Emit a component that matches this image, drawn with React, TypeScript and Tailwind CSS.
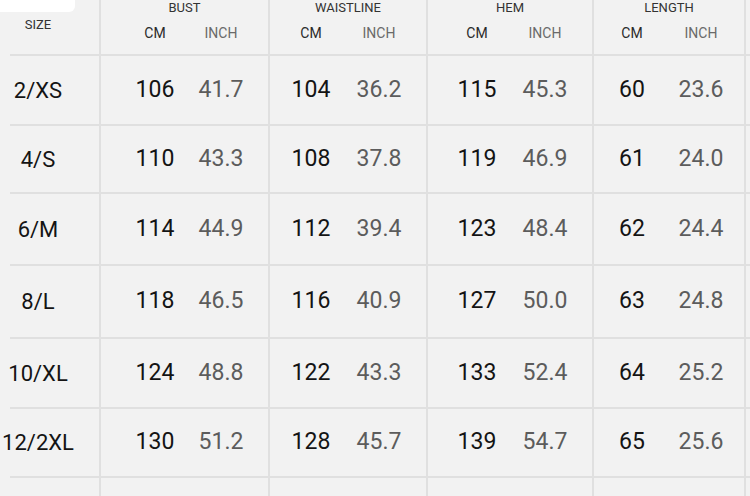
import React from "react";

// size chart: [label, bust cm/in, waist cm/in, hem cm/in, length cm/in]
const rows: [string, number[]][] = [
  ["2/XS", [106, 41.7, 104, 36.2, 115, 45.3, 60, 23.6]],
  ["4/S", [110, 43.3, 108, 37.8, 119, 46.9, 61, 24.0]],
  ["6/M", [114, 44.9, 112, 39.4, 123, 48.4, 62, 24.4]],
  ["8/L", [118, 46.5, 116, 40.9, 127, 50.0, 63, 24.8]],
  ["10/XL", [124, 48.8, 122, 43.3, 133, 52.4, 64, 25.2]],
  ["12/2XL", [130, 51.2, 128, 45.7, 139, 54.7, 65, 25.6]],
];

const rowHeights = ["h-[70px]", "h-[68px]", "h-[72px]", "h-[73px]", "h-[70px]", "h-[69px]"];

// each group: title, cell width and offsets for the CM / INCH pair
const groups = [
  { title: "BUST", w: "w-[169px]", pad: "pl-[24px] gap-[6px]" },
  { title: "WAISTLINE", w: "w-[158px]", pad: "pl-[11px] gap-[8px]" },
  { title: "HEM", w: "w-[166px]", pad: "pl-[19px] gap-[8px]" },
  { title: "LENGTH", w: "w-[152px]", pad: "pl-[8px] gap-[9px]" },
];

function Pair({ cm, inch, pad, big }: { cm: React.ReactNode; inch: React.ReactNode; pad: string; big?: boolean }) {
  return (
    <div className={`flex items-center ${pad}`}>
      <span className={`w-[60px] text-center ${big ? "text-[23px] text-[#141414]" : "text-[14px] text-[#2a2a2a]"}`}>
        {cm}
      </span>
      <span className={`w-[60px] text-center ${big ? "text-[23px] text-[#5c5c5c]" : "text-[14px] text-[#6a6a6a]"}`}>
        {inch}
      </span>
    </div>
  );
}

export default function App() {
  return (
    <div className="relative w-[750px] h-[496px] overflow-hidden bg-[#f2f2f2] font-['Roboto',sans-serif]">
      {/* white watermark patch in the corner */}
      <div className="absolute left-0 top-0 w-[75px] h-[12px] bg-white rounded-br-[6px]" />

      {/* header */}
      <div className="flex h-[56px]">
        <div className="w-[101px] border-r-2 border-[#e0e0e0] pl-[10px]">
          <div className="h-full border-b-2 border-[#e0e0e0] flex">
            <span className="w-[56px] text-center pt-[15px] text-[13px] text-[#333]">SIZE</span>
          </div>
        </div>
        {groups.map((g) => (
          <div key={g.title} className={`${g.w} border-r-2 border-b-2 border-[#e0e0e0] flex flex-col`}>
            <div className="text-center text-[13px] leading-[16px] text-[#333]">{g.title}</div>
            <div className="mt-[7px]">
              <Pair cm="CM" inch="INCH" pad={g.pad} />
            </div>
          </div>
        ))}
        <div className="flex-1 border-b-2 border-[#e0e0e0]" />
      </div>

      {rows.map(([label, v], i) => (
        <div key={label} className={`flex ${rowHeights[i]}`}>
          <div className="w-[101px] border-r-2 border-[#e0e0e0] pl-[10px]">
            <div className="h-full border-b-2 border-[#e0e0e0] flex items-center">
              <div className="w-[56px] flex justify-center whitespace-nowrap text-[22px] text-[#141414]">
                {label}
              </div>
            </div>
          </div>
          {groups.map((g, j) => (
            <div key={g.title} className={`${g.w} border-r-2 border-b-2 border-[#e0e0e0] flex items-center`}>
              <Pair cm={v[j * 2]} inch={v[j * 2 + 1].toFixed(1)} pad={g.pad} big />
            </div>
          ))}
          <div className="flex-1 border-b-2 border-[#e0e0e0]" />
        </div>
      ))}

      {/* partial last row */}
      <div className="flex h-[20px]">
        <div className="w-[101px] border-r-2 border-[#e0e0e0]" />
        {groups.map((g) => (
          <div key={g.title} className={`${g.w} border-r-2 border-[#e0e0e0]`} />
        ))}
      </div>
    </div>
  );
}
